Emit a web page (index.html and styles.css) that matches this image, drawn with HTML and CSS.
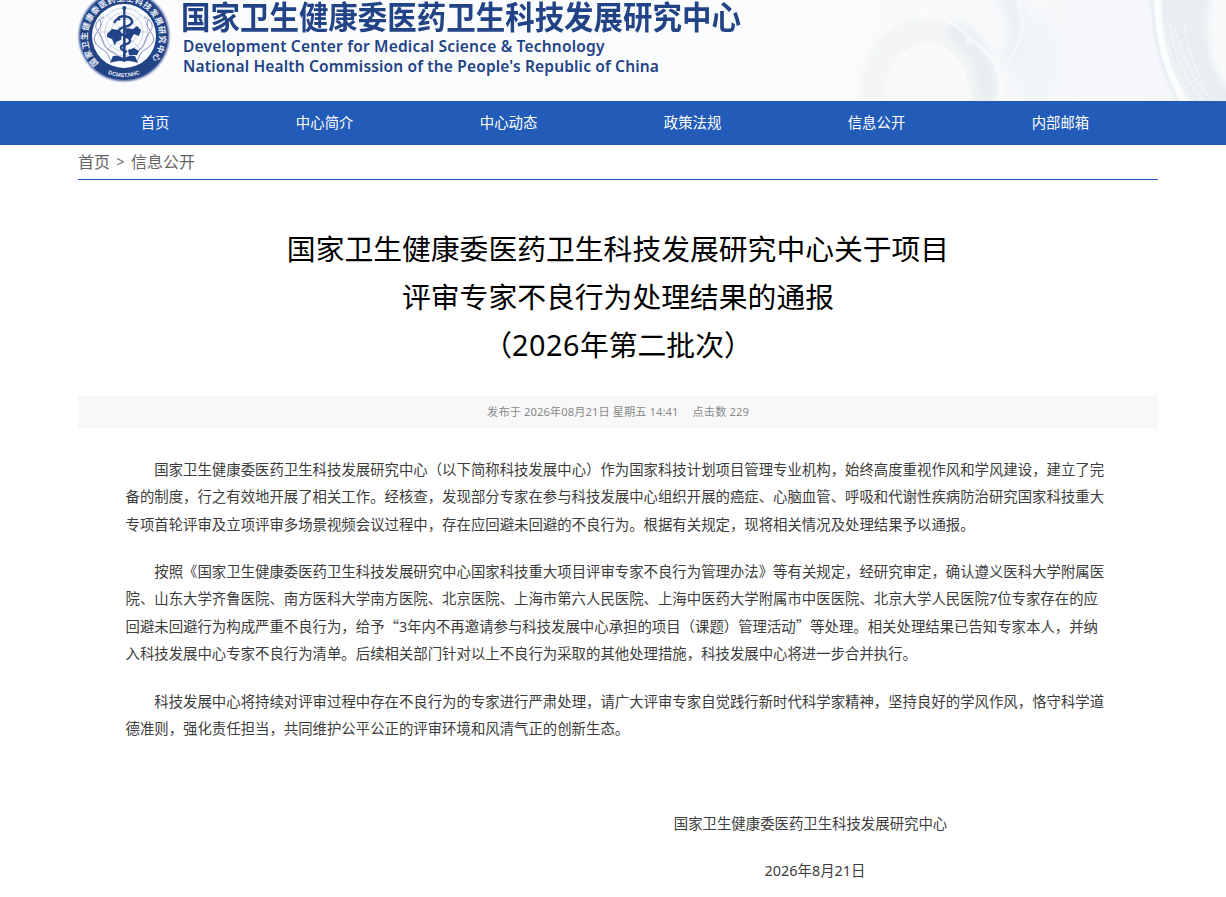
FILE: index.html
```html
<!DOCTYPE html>
<html lang="zh-CN">
<head>
<meta charset="utf-8">
<title>国家卫生健康委医药卫生科技发展研究中心</title>
<link rel="stylesheet" href="styles.css">
</head>
<body>
<header class="banner">
  <svg class="banner-art" width="466" height="101" viewBox="0 0 466 101" aria-hidden="true">
    <defs>
      <linearGradient id="fade" x1="0" x2="1"><stop offset="0" stop-color="#fafcfd"/><stop offset=".55" stop-color="#f6f8fa"/><stop offset="1" stop-color="#f4f6f9"/></linearGradient>
      <filter id="s1" x="-20%" y="-20%" width="140%" height="140%"><feGaussianBlur stdDeviation="1"/></filter>
      <filter id="s2" x="-20%" y="-20%" width="140%" height="140%"><feGaussianBlur stdDeviation="2.5"/></filter>
      <filter id="s4" x="-40%" y="-20%" width="180%" height="140%"><feGaussianBlur stdDeviation="4"/></filter>
    </defs>
    <rect width="466" height="101" fill="url(#fade)"/>
    <ellipse cx="275" cy="60" rx="26" ry="45" fill="#f0f4f8" filter="url(#s4)" opacity=".5"/>
    <path d="M238-5C252 20 252 45 242 62L254 64C268 38 266 12 256-5Z" fill="#ebf0f4" filter="url(#s4)"/>
    <path d="M256-5Q272 35 247 62" fill="none" stroke="#fbfcfd" stroke-width="2" filter="url(#s1)"/>
    <path d="M101 101C100 45 132 18 172 16C218 17 242 52 241 101Z" fill="#f3f5f6" filter="url(#s2)"/>
    <path d="M190 30C216 42 228 66 226 103" fill="none" stroke="#e8edf1" stroke-width="17" filter="url(#s4)"/>
    <ellipse cx="166" cy="88" rx="41" ry="42" fill="#f8f9fa" filter="url(#s2)"/>
    <path d="M138 60Q166 35 188 53Q204 66 209 101" fill="none" stroke="#fcfdfd" stroke-width="3" filter="url(#s1)"/>
    <path d="M160 15Q181 11 206 34L236 62Q243 82 240 101" fill="none" stroke="#fdfefe" stroke-width="2" filter="url(#s1)"/>
    <circle cx="209" cy="42" r="3" fill="#f2f4f6" stroke="#fbfcfc"/>
    <path d="M135 66l4 4m-5 6l5 2m8-12l3 4m10 2l2 4m-12 8l4 4m-14 2l4 3m28-8l2 4" stroke="#fdfefe" stroke-width="1.5"/>
    <path d="M391-5C392 50 407 84 424 105H470V-5Z" fill="#e9eef3" filter="url(#s1)"/>
    <path d="M397-5C397 50 413 85 428 105" fill="none" stroke="#fdfefe" stroke-width="8" filter="url(#s1)"/>
    <path d="M392-5C393 46 407 83 420 105" fill="none" stroke="#dce7ef" stroke-width="1.5" filter="url(#s1)"/>
    <path d="M410 25Q416 70 446 104M415 28Q422 65 450 98M424 18Q425 50 444 85M408 42Q416 80 438 104" fill="none" stroke="#f7f9fb" stroke-width="1.2" stroke-dasharray="4 2"/>
    <path d="M452-5Q444 15 449 48T474 94V-5Z" fill="#f7f9fa" filter="url(#s2)"/>
  </svg>
  <div class="brand">
    <svg class="seal" width="94" height="101" viewBox="0 0 94 101" aria-hidden="true">
      <circle cx="47" cy="36" r="46.5" fill="#c9cfe3"/>
      <circle cx="47" cy="36" r="45.2" fill="#7485b4"/>
      <circle cx="47" cy="36" r="44" fill="#224386"/>
      <circle cx="47" cy="36" r="32" fill="#fbfcfe"/>
      <path id="ring" d="M22 63.4A36 36 0 1 1 73 61.4" fill="none"/>
      <path id="base" d="M23 69.3A41 41 0 0 0 71 69.3" fill="none"/>
      <text class="seal-cn"><textPath href="#ring">国家卫生健康委医药卫生科技发展研究中心</textPath></text>
      <text class="seal-en"><textPath href="#base" startOffset="50%" text-anchor="middle">DCMST.NHC</textPath></text>
      <g fill="none" stroke="#a6b4d2" stroke-width=".6">
        <circle cx="47" cy="32" r="7"/><circle cx="47" cy="32" r="13"/><circle cx="47" cy="32" r="19"/><circle cx="47" cy="32" r="24"/>
        <path d="M23 32H71M30 15L64 50M64 15L30 50"/>
      </g>
      <g fill="none" stroke="#6e83b3" stroke-width=".9">
        <path d="M27 17C16 22 18 29 22 33C27 38 25 47 34 51S39 58 43 60M22 19C29 27 14 34 18 42S29 48 32 57S40 59 44 61"/>
        <path d="M67 17C78 22 76 29 72 33C67 38 69 47 60 51S55 58 51 60M72 19C65 27 80 34 76 42S65 48 62 57S54 59 50 61"/>
      </g>
      <g fill="#224386">
        <path d="M30 34L35 29L41 30L45 34L44 40L39 42L38 46L35 39L30 37ZM48 28L56 29L60 26L64 30L62 36L57 34L54 39L49 38ZM51 50L57 48L62 51L60 55H52Z"/>
        <path d="M46.2 8H48.4L48.8 60H46Z"/>
        <path d="M36 56Q43 55 47 59Q51 55 58 56L61 63Q52 59 47 62Q42 59 33 63Z"/>
      </g>
      <circle cx="47.3" cy="8" r="2" fill="#224386"/>
      <path d="M40 20C43 14 56 16 55 22S42 26 42 31S52 35 53 40S45 44 44 47S48 51 50 52" fill="none" stroke="#224386" stroke-width="2.4"/>
      <path d="M37 23Q40 17 43 20" fill="none" stroke="#224386" stroke-width="2"/>
    </svg>
    <div class="brand-text">
      <div class="brand-cn">国家卫生健康委医药卫生科技发展研究中心</div>
      <div class="brand-en first">Development Center for Medical Science &amp; Technology</div>
      <div class="brand-en">National Health Commission of the People's Republic of China</div>
    </div>
  </div>
</header>
<nav class="nav">
  <div class="nav-inner"><a>首页</a><a>中心简介</a><a>中心动态</a><a>政策法规</a><a>信息公开</a><a>内部邮箱</a></div>
</nav>
<main class="page">
  <div class="crumbs"><span>首页</span><span class="sep">&gt;</span><span>信息公开</span></div>
  <h1 class="title">国家卫生健康委医药卫生科技发展研究中心关于项目<br>评审专家不良行为处理结果的通报<br><span class="cjk">（</span><span class="year">2026</span>年第二批次<span class="cjk">）</span></h1>
  <div class="meta"><span>发布于 2026年08月21日 星期五 14:41</span><span>点击数 229</span></div>
  <article class="content">
    <p>国家卫生健康委医药卫生科技发展研究中心（以下简称科技发展中心）作为国家科技计划项目管理专业机构，始终高度重视作风和学风建设，建立了完<br>备的制度，行之有效地开展了相关工作。经核查，发现部分专家在参与科技发展中心组织开展的癌症、心脑血管、呼吸和代谢性疾病防治研究国家科技重大<br>专项首轮评审及立项评审多场景视频会议过程中，存在应回避未回避的不良行为。根据有关规定，现将相关情况及处理结果予以通报。</p>
    <p>按照《国家卫生健康委医药卫生科技发展研究中心国家科技重大项目评审专家不良行为管理办法》等有关规定，经研究审定，确认遵义医科大学附属医<br>院、山东大学齐鲁医院、南方医科大学南方医院、北京医院、上海市第六人民医院、上海中医药大学附属市中医医院、北京大学人民医院7位专家存在的应<br>回避未回避行为构成严重不良行为，给予<span class="cjk">“</span>3年内不再邀请参与科技发展中心承担的项目（课题）管理活动<span class="cjk">”</span>等处理。相关处理结果已告知专家本人，并纳<br>入科技发展中心专家不良行为清单。后续相关部门针对以上不良行为采取的其他处理措施，科技发展中心将进一步合并执行。</p>
    <p>科技发展中心将持续对评审过程中存在不良行为的专家进行严肃处理，请广大评审专家自觉践行新时代科学家精神，坚持良好的学风作风，恪守科学道<br>德准则，强化责任担当，共同维护公平公正的评审环境和风清气正的创新生态。</p>
    <div class="signature"><p>国家卫生健康委医药卫生科技发展研究中心</p><p class="date">2026年8月21日</p></div>
  </article>
</main>
</body>
</html>
```
FILE: styles.css
```css
* { box-sizing: border-box; }
body { margin: 0; background: #fff; color: #3c3c3c; font-family: "Noto Sans", "Noto Sans CJK SC", sans-serif; font-size: 14.4px; overflow: hidden; }
.banner { position: relative; height: 101px; background: #fafcfd; overflow: hidden; }
.banner-art { position: absolute; right: 0; top: 0; }
.brand { display: flex; position: relative; width: 1080px; margin-left: 78px; }
.seal { flex: none; margin-left: -1px; }
.seal-cn { font: 700 8.2px "Noto Sans CJK SC", sans-serif; fill: #e8edf7; letter-spacing: .6px; }
.seal-en { font: 700 5.6px "Liberation Sans", sans-serif; fill: #e8edf7; }
.brand-text { padding-left: 10px; color: #224386; white-space: nowrap; }
.brand-cn { height: 36px; line-height: 30px; font-family: "Noto Sans CJK SC", sans-serif; font-weight: 700; font-size: 29.47px; transform: scaleY(1.08); }
.brand-en { padding-left: 2px; height: 20px; line-height: 20px; font-size: 15.5px; font-weight: 600; letter-spacing: .16px; }
.brand-en.first { letter-spacing: .2px; }
.nav { height: 44px; background: #225bb8; }
.nav-inner { display: flex; width: 1080px; margin-left: 77.5px; }
.nav a { padding: 0 63.2px; line-height: 44px; color: #fff; white-space: nowrap; }
.page { width: 1080px; margin-left: 78px; }
.crumbs { display: flex; height: 35px; line-height: 34px; border-bottom: 1px solid #225bb8; font-size: 16px; color: #666; }
.sep { width: 21px; text-align: center; font-size: 14px; }
.title { height: 144px; margin: 45px 0 27px; font-size: 28.8px; line-height: 48px; font-weight: 400; color: #000; text-align: center; }
.cjk { font-family: "Noto Sans CJK SC", sans-serif; line-height: 0; }
.year { letter-spacing: .5px; }
.meta { display: flex; justify-content: center; gap: 14px; height: 32px; line-height: 32px; background: #f8f8f8; color: #888; font-size: 11.2px; letter-spacing: .09px; }
.content { padding: 28px 0 0 47.5px; line-height: 27.36px; white-space: nowrap; }
.content p { margin: 0 0 20px; text-indent: 28.8px; }
.signature { width: 274px; margin: 67.36px 0 0 548px; }
.signature p { text-indent: 0; text-align: center; }
.signature .date { padding-left: 9px; }
```
